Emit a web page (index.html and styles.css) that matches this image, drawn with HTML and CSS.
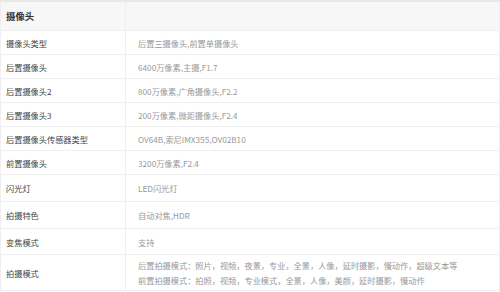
FILE: index.html
```html
<!DOCTYPE html>
<html lang="zh">
<head>
<meta charset="utf-8">
<link rel="stylesheet" href="styles.css">
</head>
<body>
<div class="spec">
  <div class="row head"><div class="k">摄像头</div><div class="v"></div></div>
  <div class="row"><div class="k">摄像头类型</div><div class="v">后置三摄像头,前置单摄像头</div></div>
  <div class="row"><div class="k">后置摄像头</div><div class="v">6400万像素,主摄,F1.7</div></div>
  <div class="row"><div class="k">后置摄像头2</div><div class="v">800万像素,广角摄像头,F2.2</div></div>
  <div class="row"><div class="k">后置摄像头3</div><div class="v">200万像素,微距摄像头,F2.4</div></div>
  <div class="row"><div class="k">后置摄像头传感器类型</div><div class="v">OV64B,索尼IMX355,OV02B10</div></div>
  <div class="row"><div class="k">前置摄像头</div><div class="v">3200万像素,F2.4</div></div>
  <div class="row r27"><div class="k">闪光灯</div><div class="v">LED闪光灯</div></div>
  <div class="row r27"><div class="k">拍摄特色</div><div class="v">自动对焦,HDR</div></div>
  <div class="row r26"><div class="k">变焦模式</div><div class="v">支持</div></div>
  <div class="row multi"><div class="k">拍摄模式</div><div class="v">后置拍摄模式：照片，视频，夜景，专业，全景，人像，延时摄影，慢动作，超级文本等<br>前置拍摄模式：拍照，视频，专业模式，全景，人像，美颜，延时摄影，慢动作</div></div>
</div>
</body>
</html>
```
FILE: styles.css
```css
html, body {
  margin: 0;
  padding: 0;
  background: #ffffff;
}
body {
  font-family: "Noto Sans CJK SC", "Microsoft YaHei", sans-serif;
  font-size: 8.2px;
}
.spec {
  width: 500px;
  box-sizing: border-box;
  border-top: 2px solid #e8e8e8;
  border-left: 1px solid #efefef;
  border-right: 1px solid #efefef;
}
.row {
  display: flex;
  box-sizing: border-box;
  height: 24px;
  border-bottom: 1px solid #efefef;
}
.row.head {
  height: 29px;
  background: #f7f7f7;
}
.row.r27 { height: 27px; }
.row.r26 { height: 26px; }
.row.multi { height: 36px; }
.k {
  width: 125px;
  flex: none;
  box-sizing: border-box;
  border-right: 1px solid #efefef;
  padding-left: 5px;
  display: flex;
  align-items: center;
  color: #444;
}
.head .k {
  font-size: 9.4px;
  font-weight: bold;
  color: #333;
}
.v {
  flex: 1;
  padding-left: 12px;
  display: flex;
  align-items: center;
  color: #999;
}
.multi .v {
  line-height: 15px;
}
```
